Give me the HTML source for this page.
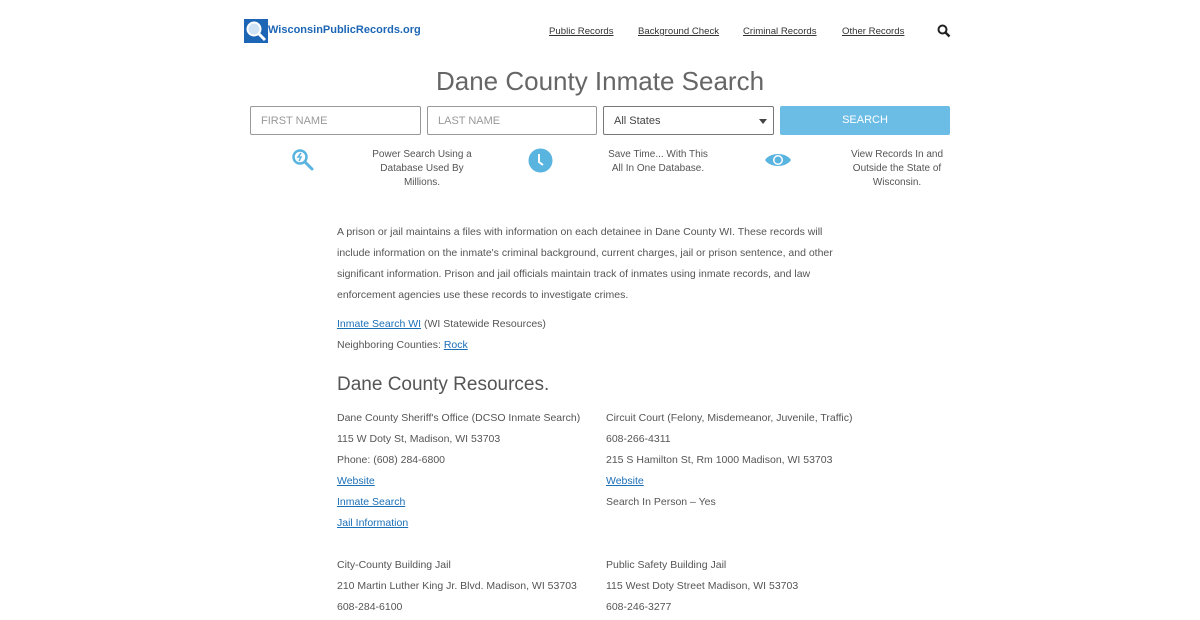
<!DOCTYPE html>
<html><head><meta charset="utf-8">
<style>
*{margin:0;padding:0;box-sizing:border-box}
body{width:1200px;height:620px;overflow:hidden;background:#fff;font-family:"Liberation Sans",sans-serif;color:#555}
.abs{position:absolute}
a{color:#1a6fb7;text-decoration:underline}
.nav a{color:#333;font-size:9.6px;position:absolute;top:26px}
h1{position:absolute;top:66px;left:0;width:1200px;text-align:center;font-weight:normal;font-size:26px;color:#666}
.inp{position:absolute;top:106px;height:29px;border:1px solid #999;border-radius:2px;font-size:11px;color:#999;padding:8px 10px}
.feat{position:absolute;top:148px;font-size:10px;line-height:14px;text-align:center;color:#555}
.p{position:absolute;left:337px;font-size:10.5px;color:#555}
.l{position:absolute;font-size:10.5px;color:#555}
</style></head><body>
<svg class="abs" style="left:244px;top:19px" width="24" height="24" viewBox="0 0 24 24"><rect width="24" height="24" fill="#1d66b5"/><circle cx="10" cy="10" r="6.5" fill="#cfe3f5" stroke="#fff" stroke-width="2"/><path d="M15 15l6 6" stroke="#fff" stroke-width="3"/></svg>
<div class="abs" style="left:268px;top:24px;font-weight:bold;font-size:11px;color:#1d66b5">WisconsinPublicRecords.org</div>
<div class="nav"><a style="left:549px">Public Records</a><a style="left:638px">Background Check</a><a style="left:743px">Criminal Records</a><a style="left:842px">Other Records</a></div>
<svg class="abs" style="left:937px;top:24px" width="14" height="14" viewBox="0 0 14 14"><circle cx="5.5" cy="5.5" r="4" fill="none" stroke="#222" stroke-width="2"/><path d="M8.5 8.5l4 4" stroke="#222" stroke-width="2.4"/></svg>
<h1>Dane County Inmate Search</h1>
<div class="inp" style="left:250px;width:171px">FIRST NAME</div>
<div class="inp" style="left:427px;width:170px">LAST NAME</div>
<div class="inp" style="left:603px;width:171px;color:#444;border-color:#777">All States<span class="abs" style="right:6px;top:12px;border:4px solid transparent;border-top:5px solid #444"></span></div>
<div class="abs" style="left:780px;top:106px;width:170px;height:29px;background:#6bbde6;border-radius:2px;color:#fff;font-size:11px;text-align:center;line-height:29px">SEARCH</div>
<svg class="abs" style="left:291px;top:148px" width="24" height="24" viewBox="0 0 24 24"><circle cx="9" cy="9" r="6.5" fill="none" stroke="#5ab4e0" stroke-width="2.5"/><path d="M14 14l7 7" stroke="#5ab4e0" stroke-width="3" stroke-linecap="round"/><path d="M10 5l-3 4h3l-2 4" fill="none" stroke="#5ab4e0" stroke-width="1.5"/></svg>
<div class="feat" style="left:362px;width:120px">Power Search Using a<br>Database Used By<br>Millions.</div>
<svg class="abs" style="left:528px;top:148px" width="25" height="25" viewBox="0 0 25 25"><circle cx="12.5" cy="12.5" r="12" fill="#5ab4e0"/><path d="M11 6v8l4 3" fill="none" stroke="#fff" stroke-width="2"/></svg>
<div class="feat" style="left:598px;width:120px">Save Time... With This<br>All In One Database.</div>
<svg class="abs" style="left:764px;top:150px" width="28" height="20" viewBox="0 0 28 20"><path d="M1 10C6 2 22 2 27 10C22 18 6 18 1 10Z" fill="#5ab4e0"/><circle cx="14" cy="10" r="5" fill="#fff"/><circle cx="14" cy="10" r="3.5" fill="#5ab4e0"/></svg>
<div class="feat" style="left:838px;width:118px">View Records In and<br>Outside the State of<br>Wisconsin.</div>
<div class="p" style="top:222px;width:515px;line-height:21px">A prison or jail maintains a files with information on each detainee in Dane County WI. These records will include information on the inmate's criminal background, current charges, jail or prison sentence, and other significant information. Prison and jail officials maintain track of inmates using inmate records, and law enforcement agencies use these records to investigate crimes.</div>
<div class="p" style="top:318px"><a>Inmate Search WI</a> (WI Statewide Resources)</div>
<div class="p" style="top:339px">Neighboring Counties: <a>Rock</a></div>
<div class="p" style="top:374px;font-size:19px;color:#555">Dane County Resources.</div>
<div class="l" style="left:337px;top:408px;line-height:21px">Dane County Sheriff's Office (DCSO Inmate Search)<br>115 W Doty St, Madison, WI 53703<br>Phone: (608) 284-6800<br><a>Website</a><br><a>Inmate Search</a><br><a>Jail Information</a></div>
<div class="l" style="left:606px;top:408px;line-height:21px">Circuit Court (Felony, Misdemeanor, Juvenile, Traffic)<br>608-266-4311<br>215 S Hamilton St, Rm 1000 Madison, WI 53703<br><a>Website</a><br>Search In Person – Yes</div>
<div class="l" style="left:337px;top:555px;line-height:21px">City-County Building Jail<br>210 Martin Luther King Jr. Blvd. Madison, WI 53703<br>608-284-6100</div>
<div class="l" style="left:606px;top:555px;line-height:21px">Public Safety Building Jail<br>115 West Doty Street Madison, WI 53703<br>608-246-3277</div>
</body></html>
